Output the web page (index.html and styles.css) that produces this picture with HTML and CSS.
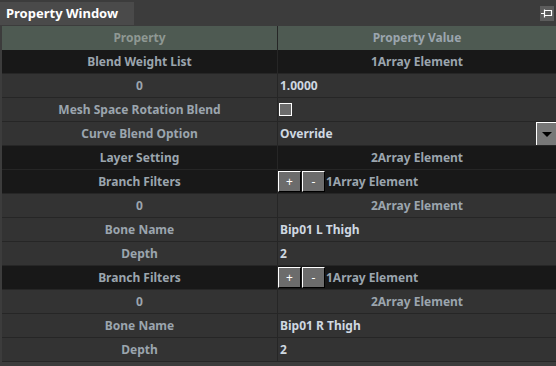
FILE: index.html
```html
<!DOCTYPE html>
<html lang="en">
<head>
    <meta charset="UTF-8">
    <title>Property Window</title>
    <link rel="stylesheet" href="styles.css">
</head>
<body>

    <div class="topbar">
        <div class="tab">Property Window</div>
        <div class="pin">
            <svg width="14" height="15" viewBox="0 0 14 15">
                <path d="M1 7.5H4.5M4.5 3.5V11.5M4.5 4.5H11.5V9.5H4.5" fill="none" stroke="#fff" stroke-width="1.2"/>
            </svg>
        </div>
    </div>

    <div class="grid">
        <div class="row head">
            <div class="name">Property</div>
            <div class="val center">Property Value</div>
        </div>
        <div class="row dark">
            <div class="name">Blend Weight List</div>
            <div class="val center">1Array Element</div>
        </div>
        <div class="row">
            <div class="name">0</div>
            <div class="val">1.0000</div>
        </div>
        <div class="row">
            <div class="name">Mesh Space Rotation Blend</div>
            <div class="val"><span class="check"></span></div>
        </div>
        <div class="row">
            <div class="name">Curve Blend Option</div>
            <div class="val combo">Override <span class="drop"></span></div>
        </div>
        <div class="row dark">
            <div class="name">Layer Setting</div>
            <div class="val center">2Array Element</div>
        </div>
        <div class="row dark">
            <div class="name">Branch Filters</div>
            <div class="val tools"><button class="btn">+</button><button class="btn">-</button><span class="dim">1Array Element</span></div>
        </div>
        <div class="row">
            <div class="name">0</div>
            <div class="val center">2Array Element</div>
        </div>
        <div class="row">
            <div class="name">Bone Name</div>
            <div class="val">Bip01 L Thigh</div>
        </div>
        <div class="row">
            <div class="name">Depth</div>
            <div class="val">2</div>
        </div>
        <div class="row dark">
            <div class="name">Branch Filters</div>
            <div class="val tools"><button class="btn">+</button><button class="btn">-</button><span class="dim">1Array Element</span></div>
        </div>
        <div class="row">
            <div class="name">0</div>
            <div class="val center">2Array Element</div>
        </div>
        <div class="row">
            <div class="name">Bone Name</div>
            <div class="val">Bip01 R Thigh</div>
        </div>
        <div class="row">
            <div class="name">Depth</div>
            <div class="val">2</div>
        </div>
    </div>

</body>
</html>
```

FILE: styles.css
```css
body {
    margin: 0;
    background-color: #3c3c3c;
    font-family: "Noto Sans", "Open Sans", sans-serif;
    font-weight: bold;
    font-size: 12px;
    overflow: hidden;
}

.topbar {
    height: 26px;
    display: flex;
    align-items: flex-start;
    justify-content: space-between;
}

.tab {
    margin-top: 2px;
    width: 128px;
    height: 23px;
    padding-left: 6px;
    background-color: #4a4a4a;
    color: #ffffff;
    font-size: 13px;
    line-height: 23px;
}

.pin {
    margin-top: 6px;
    margin-right: 2px;
    width: 14px;
    height: 15px;
    background-color: #5c5c5c;
    display: flex;
}

.grid {
    margin-left: 2px;
}

.row {
    display: grid;
    grid-template-columns: 276px 1fr;
    height: 23px;
    border-bottom: 1px solid #262626;
    background-color: #333333;
    color: #9ba5ae;
    line-height: 23px;
}

.row.head {
    background-color: #4e5a52;
    color: #8e9893;
    border-bottom: none;
    height: 24px;
    line-height: 24px;
}

.row.dark {
    background-color: #181818;
}

.name {
    text-align: center;
    border-right: 1px solid #262626;
}

.val {
    padding-left: 2px;
    color: #cfd8e1;
    display: flex;
    align-items: center;
}

.val.center {
    justify-content: center;
    color: #9ba5ae;
    padding-left: 0;
}

.check {
    width: 11px;
    height: 11px;
    margin-left: -1px;
    border: 1px solid #ffffff;
    background-color: #6c6c6c;
}

.combo {
    justify-content: space-between;
}

.drop {
    width: 19px;
    height: 22px;
    border-left: 1px solid #ffffff;
    border-top: 1px solid #ffffff;
    background-color: #787878;
    display: flex;
    align-items: center;
    justify-content: center;
}

.drop::after {
    content: "";
    border-left: 5px solid transparent;
    border-right: 5px solid transparent;
    border-top: 5px solid #000000;
}

.tools {
    padding-left: 0;
}

.btn {
    width: 23px;
    height: 21px;
    margin-right: 1px;
    padding: 0;
    background-color: #6c6c6c;
    color: #ffffff;
    font-family: "Noto Sans", sans-serif;
    font-size: 12px;
    border-top: 1px solid #ffffff;
    border-left: 1px solid #ffffff;
    border-right: 1px solid #000000;
    border-bottom: 1px solid #000000;
    line-height: 18px;
}

.dim {
    color: #9ba5ae;
}
```
